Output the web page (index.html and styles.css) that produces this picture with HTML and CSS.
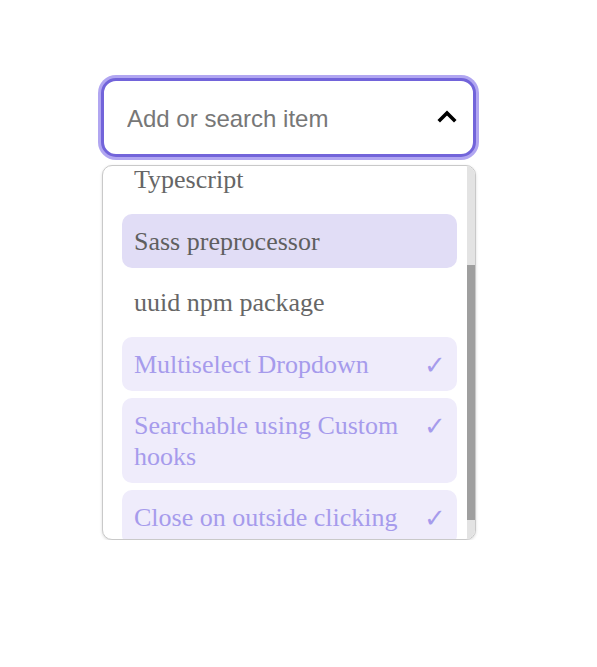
FILE: index.html
```html
<!DOCTYPE html>
<html lang="en">
<head>
<meta charset="utf-8">
<title>Multiselect Dropdown</title>
<link rel="stylesheet" href="styles.css">
</head>
<body>
<div class="select">
  <div class="control">
    <input class="search" type="text" placeholder="Add or search item" autofocus>
    <svg class="chevron" width="20" height="14" viewBox="0 0 20 14" aria-hidden="true">
      <polyline points="3,11 10,4 17,11" fill="none" stroke="#000" stroke-width="3.6" stroke-linecap="square" stroke-linejoin="miter"/>
    </svg>
  </div>
  <div class="panel">
    <ul class="list">
      <li class="item">React</li>
      <li class="item">Javascript</li>
      <li class="item">Typescript</li>
      <li class="item hover">Sass preprocessor</li>
      <li class="item">uuid npm package</li>
      <li class="item selected"><span>Multiselect Dropdown</span><span class="check">✓</span></li>
      <li class="item selected"><span>Searchable using Custom hooks</span><span class="check">✓</span></li>
      <li class="item selected"><span>Close on outside clicking</span><span class="check">✓</span></li>
    </ul>
    <div class="scrollbar"><div class="thumb"></div></div>
  </div>
</div>
<script src="script.js"></script>
</body>
</html>
```
FILE: styles.css
```css
* { box-sizing: border-box; }
html, body { margin: 0; padding: 0; background: #fff; }
body { padding: 78px 0 0 101px; }

.select {
  width: 375px;
  display: flex;
  flex-direction: column;
  gap: 8px;
}

.control {
  height: 79px;
  border: 3px solid #7264da;
  border-radius: 15px;
  box-shadow: 0 0 0 3px #b1a6f1;
  display: flex;
  align-items: center;
  padding: 0 16px 0 23px;
  background: #fff;
}

.search {
  flex: 1;
  border: none;
  outline: none;
  font-family: "Liberation Sans", Arial, sans-serif;
  font-size: 24px;
  color: #333;
  padding: 0;
  margin-top: 2px;
  caret-color: #333;
  background: transparent;
}
.search::placeholder { color: #777; }

.chevron { flex: none; margin-top: -4px; }

.panel {
  position: relative;
  margin-left: 1px;
  height: 375px;
  border: 1px solid #c9c9c9;
  border-radius: 10px;
  box-shadow: 0 1px 3px rgba(0,0,0,0.15);
  background: #fff;
  overflow: hidden;
}

.list {
  list-style: none;
  margin: 0;
  padding: 7px 18px 7px 19px;
  height: 100%;
  overflow: hidden;
  display: flex;
  flex-direction: column;
  gap: 7px;
}

.scrollbar {
  position: absolute;
  top: 0;
  right: 0;
  bottom: 0;
  width: 8px;
  background: #e3e3e3;
}
.thumb {
  position: absolute;
  left: 0;
  right: 0;
  top: 99px;
  height: 255px;
  background: #9f9f9f;
}

.item {
  flex: none;
  display: flex;
  justify-content: space-between;
  align-items: flex-start;
  gap: 12px;
  padding: 13px 12px 11px;
  border-radius: 10px;
  font-family: "Liberation Serif", "Times New Roman", serif;
  font-size: 26px;
  line-height: 30.5px;
  color: #666;
}
.item.hover { background: #e1ddf6; color: #5f5f5f; }
.item.selected { background: #efecfb; color: #a69bec; }
.check {
  flex: none;
  font-family: "DejaVu Sans", sans-serif;
  font-weight: 200;
  font-size: 26px;
  margin-right: -1px;
}
```
FILE: script.js
```js
document.querySelector('.list').scrollTop = 144;
```
